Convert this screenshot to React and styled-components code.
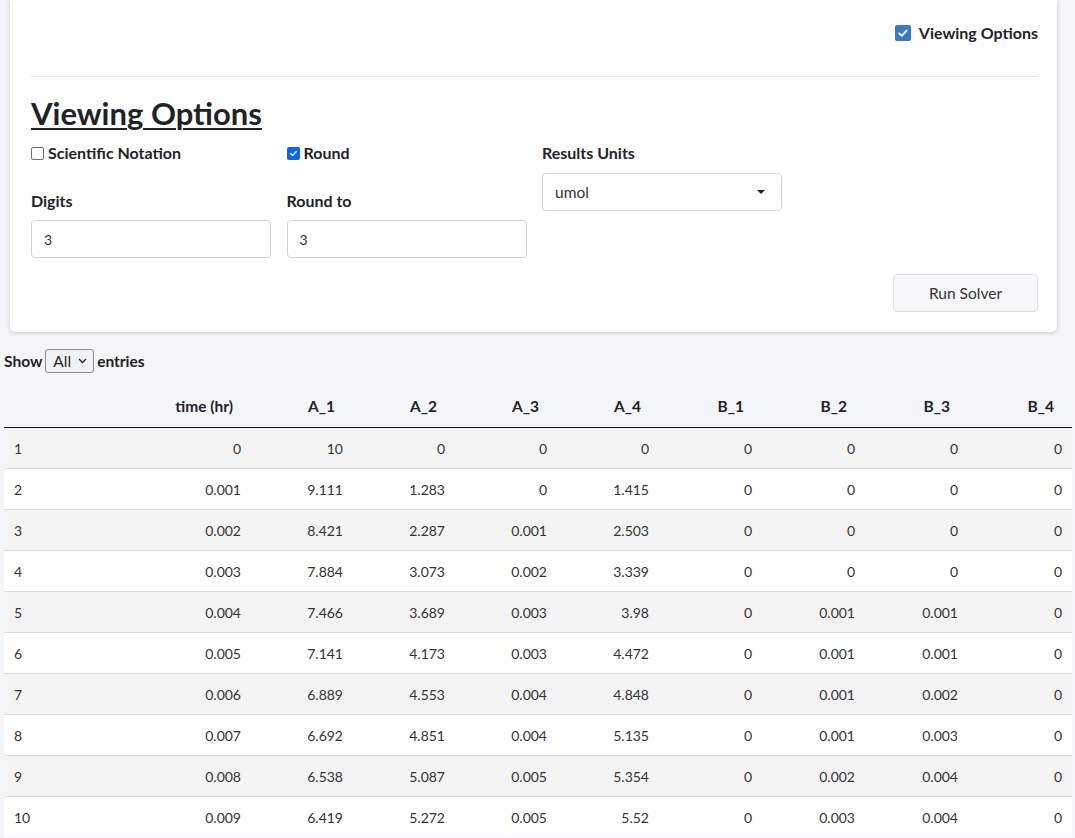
import React from 'react';
import styled, { createGlobalStyle } from 'styled-components';

const GlobalStyle = createGlobalStyle`
  body {
    margin: 0;
    background: #f4f5f8;
    font-family: Lato, "Open Sans", sans-serif;
    color: #212529;
  }
`;

const Page = styled.div`
  width: 1075px;
  overflow: hidden;
`;

const Card = styled.div`
  margin: 0 18px 0 10px;
  background: #fff;
  border-radius: 0 0 5px 5px;
  box-shadow: 0 1px 4px rgba(0, 0, 0, 0.18);
  padding: 23px 19px 20px 21px;
`;

const TopBar = styled.div`
  display: flex;
  justify-content: flex-end;
  padding-bottom: 33px;
  border-bottom: 1px solid #e5e5e5;
`;

const CheckLabel = styled.label`
  display: flex;
  align-items: center;
  gap: ${(p) => p.$gap || 4}px;
  font-size: ${(p) => p.$size || 16}px;
  font-weight: 700;
  line-height: 20px;
  color: #1f2328;
`;

const Box = styled.span`
  flex-shrink: 0;
  width: ${(p) => p.$size}px;
  height: ${(p) => p.$size}px;
  box-sizing: border-box;
  border-radius: 2px;
  display: inline-flex;
  align-items: center;
  justify-content: center;
  background: ${(p) => (p.$checked ? p.$color : '#fff')};
  border: ${(p) => (p.$checked ? 'none' : '1.5px solid #6c6f78')};
`;

const Heading = styled.h2`
  margin: 18px 0 12px;
  font-size: 31px;
  line-height: 36px;
  font-weight: 700;
  color: #1f2328;
  text-decoration: underline;
  text-decoration-thickness: 2px;
  text-underline-offset: 3px;
`;

const Grid = styled.div`
  display: grid;
  grid-template-columns: repeat(3, 240px);
  column-gap: 15.5px;
  align-items: start;
`;

const Column = styled.div`
  display: flex;
  flex-direction: column;
`;

const FieldLabel = styled.div`
  font-size: 16px;
  font-weight: 700;
  line-height: 20px;
  color: #1f2328;
  margin-bottom: ${(p) => p.$mb || 9}px;
  margin-top: ${(p) => p.$mt || 0}px;
`;

const Input = styled.div`
  height: 38px;
  box-sizing: border-box;
  border: 1px solid #ced4da;
  border-radius: 4px;
  padding: 0 12px;
  display: flex;
  align-items: center;
  justify-content: space-between;
  font-size: ${(p) => p.$size || 14}px;
  color: #333;
`;

const Caret = styled.span`
  width: 0;
  height: 0;
  border-left: 4px solid transparent;
  border-right: 4px solid transparent;
  border-top: 4px solid #222;
  margin-right: 4px;
`;

const ButtonRow = styled.div`
  display: flex;
  justify-content: flex-end;
  margin-top: 16px;
`;

const Button = styled.button`
  width: 145px;
  height: 38px;
  background: #f7f8fa;
  border: 1px solid #dcdfe3;
  border-radius: 4px;
  font-family: inherit;
  font-size: 15.5px;
  color: #333;
`;

const LengthBar = styled.div`
  display: flex;
  align-items: center;
  gap: 3px;
  margin: 17px 0 0 4px;
  font-size: 15.5px;
  font-weight: 700;
  color: #1f2328;
`;

const LengthSelect = styled.span`
  display: inline-flex;
  align-items: center;
  gap: 7px;
  height: 24px;
  box-sizing: border-box;
  padding: 0 6px 0 7px;
  border: 1px solid #8a8d93;
  border-radius: 3px;
  background: #f1f2f5;
  font-weight: 400;
`;

const Table = styled.table`
  margin: 12px 0 0 4px;
  width: 1068px;
  border-collapse: collapse;
  font-size: 14px;
  table-layout: fixed;
`;

const Th = styled.th`
  height: 42px;
  padding: 0 18px 0 10px;
  text-align: right;
  font-size: 15.5px;
  font-weight: 700;
  color: #1f2328;
  border-bottom: 1px solid #111;
`;

const Row = styled.tr`
  background: ${(p) => (p.$odd ? '#f4f4f4' : '#fff')};
`;

const Td = styled.td`
  height: 40px;
  padding: 0 10px;
  text-align: ${(p) => (p.$left ? 'left' : 'right')};
  border-top: 1px solid #dcdcdc;
  color: #333;
`;

const Check = ({ checked, color, size }) => (
  <Box $checked={checked} $color={color} $size={size}>
    {checked && (
      <svg width={size - 4} height={size - 4} viewBox="0 0 12 12">
        <path d="M2.2 6.3l2.6 2.5 5-5.4" fill="none" stroke="#fff" strokeWidth="1.8" strokeLinecap="round" strokeLinejoin="round" />
      </svg>
    )}
  </Box>
);

const headers = ['', 'time (hr)', 'A_1', 'A_2', 'A_3', 'A_4', 'B_1', 'B_2', 'B_3', 'B_4'];

const rows = [
  ['1', '0', '10', '0', '0', '0', '0', '0', '0', '0'],
  ['2', '0.001', '9.111', '1.283', '0', '1.415', '0', '0', '0', '0'],
  ['3', '0.002', '8.421', '2.287', '0.001', '2.503', '0', '0', '0', '0'],
  ['4', '0.003', '7.884', '3.073', '0.002', '3.339', '0', '0', '0', '0'],
  ['5', '0.004', '7.466', '3.689', '0.003', '3.98', '0', '0.001', '0.001', '0'],
  ['6', '0.005', '7.141', '4.173', '0.003', '4.472', '0', '0.001', '0.001', '0'],
  ['7', '0.006', '6.889', '4.553', '0.004', '4.848', '0', '0.001', '0.002', '0'],
  ['8', '0.007', '6.692', '4.851', '0.004', '5.135', '0', '0.001', '0.003', '0'],
  ['9', '0.008', '6.538', '5.087', '0.005', '5.354', '0', '0.002', '0.004', '0'],
  ['10', '0.009', '6.419', '5.272', '0.005', '5.52', '0', '0.003', '0.004', '0'],
];

const widths = [144, 103, 102, 102, 102, 102, 103, 103, 103, 104];

const App = () => (
  <Page>
    <GlobalStyle />
    <Card>
      <TopBar>
        <CheckLabel $gap={8}>
          <Check checked color="#3a7bbf" size={16} />
          Viewing Options
        </CheckLabel>
      </TopBar>
      <Heading>Viewing Options</Heading>
      <Grid>
        <Column>
          <CheckLabel>
            <Check color="#3a7bbf" size={13} />
            Scientific Notation
          </CheckLabel>
          <FieldLabel $mt={28}>Digits</FieldLabel>
          <Input>3</Input>
        </Column>
        <Column>
          <CheckLabel>
            <Check checked color="#0d66e8" size={13} />
            Round
          </CheckLabel>
          <FieldLabel $mt={28}>Round to</FieldLabel>
          <Input>3</Input>
        </Column>
        <Column>
          <FieldLabel $mb={10}>Results Units</FieldLabel>
          <Input $size={15.5}>
            umol
            <Caret />
          </Input>
        </Column>
      </Grid>
      <ButtonRow>
        <Button>Run Solver</Button>
      </ButtonRow>
    </Card>
    <LengthBar>
      Show
      <LengthSelect>
        All
        <svg width="9" height="6" viewBox="0 0 9 6">
          <path d="M1 1l3.5 3.5L8 1" fill="none" stroke="#222" strokeWidth="1.3" />
        </svg>
      </LengthSelect>
      entries
    </LengthBar>
    <Table>
      <colgroup>
        {widths.map((w, i) => (
          <col key={i} style={{ width: w }} />
        ))}
      </colgroup>
      <thead>
        <tr>
          {headers.map((h, i) => (
            <Th key={i}>{h}</Th>
          ))}
        </tr>
      </thead>
      <tbody>
        {rows.map((r, i) => (
          <Row key={i} $odd={i % 2 === 0}>
            {r.map((c, j) => (
              <Td key={j} $left={j === 0}>
                {c}
              </Td>
            ))}
          </Row>
        ))}
      </tbody>
    </Table>
  </Page>
);

export default App;
